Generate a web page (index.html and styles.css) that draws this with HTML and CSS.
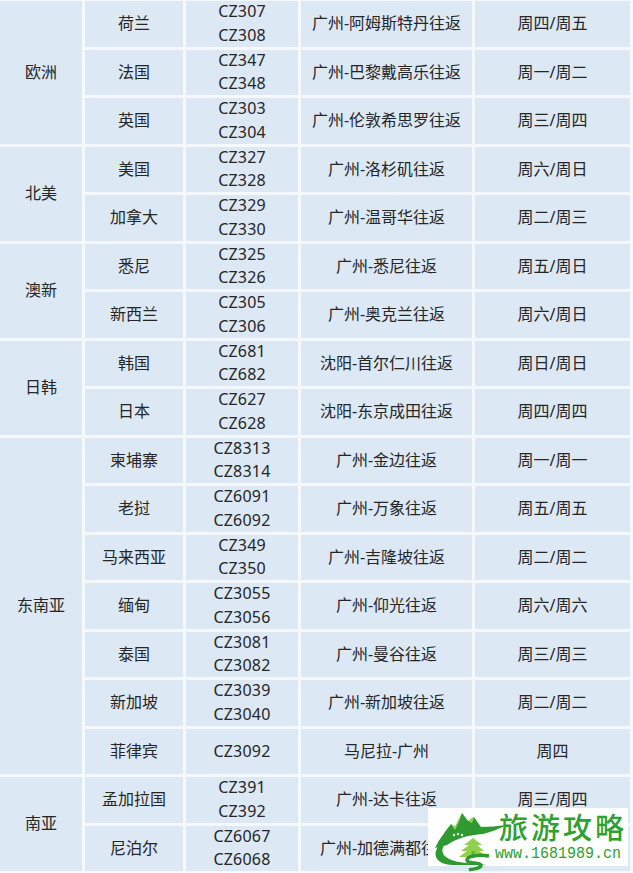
FILE: index.html
```html
<!DOCTYPE html>
<html lang="zh-CN">
<head>
<meta charset="utf-8">
<title>南航国际航线</title>
<link rel="stylesheet" href="styles.css">
</head>
<body>
<div class="sheet">
  <div class="table">
    <div class="cell region span3">欧洲</div>
    <div class="cell">荷兰</div><div class="cell code">CZ307<br>CZ308</div><div class="cell">广州-阿姆斯特丹往返</div><div class="cell">周四/周五</div>
    <div class="cell">法国</div><div class="cell code">CZ347<br>CZ348</div><div class="cell">广州-巴黎戴高乐往返</div><div class="cell">周一/周二</div>
    <div class="cell">英国</div><div class="cell code">CZ303<br>CZ304</div><div class="cell">广州-伦敦希思罗往返</div><div class="cell">周三/周四</div>

    <div class="cell region span2">北美</div>
    <div class="cell">美国</div><div class="cell code">CZ327<br>CZ328</div><div class="cell">广州-洛杉矶往返</div><div class="cell">周六/周日</div>
    <div class="cell">加拿大</div><div class="cell code">CZ329<br>CZ330</div><div class="cell">广州-温哥华往返</div><div class="cell">周二/周三</div>

    <div class="cell region span2">澳新</div>
    <div class="cell">悉尼</div><div class="cell code">CZ325<br>CZ326</div><div class="cell">广州-悉尼往返</div><div class="cell">周五/周日</div>
    <div class="cell">新西兰</div><div class="cell code">CZ305<br>CZ306</div><div class="cell">广州-奥克兰往返</div><div class="cell">周六/周日</div>

    <div class="cell region span2">日韩</div>
    <div class="cell">韩国</div><div class="cell code">CZ681<br>CZ682</div><div class="cell">沈阳-首尔仁川往返</div><div class="cell">周日/周日</div>
    <div class="cell">日本</div><div class="cell code">CZ627<br>CZ628</div><div class="cell">沈阳-东京成田往返</div><div class="cell">周四/周四</div>

    <div class="cell region span7">东南亚</div>
    <div class="cell">柬埔寨</div><div class="cell code">CZ8313<br>CZ8314</div><div class="cell">广州-金边往返</div><div class="cell">周一/周一</div>
    <div class="cell">老挝</div><div class="cell code">CZ6091<br>CZ6092</div><div class="cell">广州-万象往返</div><div class="cell">周五/周五</div>
    <div class="cell">马来西亚</div><div class="cell code">CZ349<br>CZ350</div><div class="cell">广州-吉隆坡往返</div><div class="cell">周二/周二</div>
    <div class="cell">缅甸</div><div class="cell code">CZ3055<br>CZ3056</div><div class="cell">广州-仰光往返</div><div class="cell">周六/周六</div>
    <div class="cell">泰国</div><div class="cell code">CZ3081<br>CZ3082</div><div class="cell">广州-曼谷往返</div><div class="cell">周三/周三</div>
    <div class="cell">新加坡</div><div class="cell code">CZ3039<br>CZ3040</div><div class="cell">广州-新加坡往返</div><div class="cell">周二/周二</div>
    <div class="cell">菲律宾</div><div class="cell code">CZ3092</div><div class="cell">马尼拉-广州</div><div class="cell">周四</div>

    <div class="cell region span2">南亚</div>
    <div class="cell">孟加拉国</div><div class="cell code">CZ391<br>CZ392</div><div class="cell">广州-达卡往返</div><div class="cell">周三/周四</div>
    <div class="cell">尼泊尔</div><div class="cell code">CZ6067<br>CZ6068</div><div class="cell">广州-加德满都往返</div><div class="cell"></div>
  </div>

  <div class="watermark">
    <svg class="logo" viewBox="0 0 78 58" width="78" height="58">
      <path d="M6,40 C10,31 16,24 22,16 L26,19 L33,5 L39,13 L45,9 L52,19 C60,19 68,18 78,17 C70,21 62,24 54,26 C40,27 28,30 18,37 Z" fill="#2f9a31"/>
      <path d="M22,16 L26,19 L33,5 L30,14 L26,22 Z" fill="#93d255"/>
      <path d="M39,13 L45,9 L43,15 Z" fill="#93d255"/>
      <circle cx="25" cy="27" r="1.2" fill="#e8f6d8"/>
      <circle cx="29" cy="26" r="1.2" fill="#e8f6d8"/>
      <circle cx="33" cy="27" r="1.2" fill="#e8f6d8"/>
      <path d="M14,34 C2,42 4,57 24,57 L58,57 C40,55 24,55 17,49 C12,45 12,39 18,35 Z" fill="#2f9a31"/>
      <path d="M44,30 L35,37 L40,37 L32,43 L38,43 L30,49 L58,49 L50,43 L55,43 L48,37 L53,37 Z" fill="#8fd14d"/>
      <path d="M44,43 L44,50" stroke="#5db536" stroke-width="3"/>
      <path d="M60,48 C50,46 38,48 38,52 C38,56 50,54 52,57 C53,60 44,61 40,62" stroke="#2f9a31" stroke-width="3.5" fill="none"/>
    </svg>
    <div class="brand">
      <div class="brand-title">旅游攻略</div>
      <div class="brand-url">www.1681989.cn</div>
    </div>
  </div>
</div>
</body>
</html>
```

FILE: styles.css
```css
html, body {
  margin: 0;
  padding: 0;
  background: #f5f9fd;
}

body {
  width: 633px;
  height: 873px;
  overflow: hidden;
  font-family: "Noto Sans", "Noto Sans CJK SC", sans-serif;
  color: #262626;
}

.sheet {
  position: relative;
  width: 633px;
  height: 873px;
  overflow: hidden;
}

.table {
  display: grid;
  grid-template-columns: 82px 98px 112px 171px 155px;
  grid-auto-rows: 45.5px;
  gap: 3px;
  padding-top: 1px;
  width: 633px;
  box-sizing: border-box;
}

.cell {
  background: #dce8f4;
  display: flex;
  align-items: center;
  justify-content: center;
  text-align: center;
  font-size: 16px;
  line-height: 23.5px;
  white-space: nowrap;
}

.code {
  letter-spacing: 0.2px;
}

.span2 { grid-row: span 2; }
.span3 { grid-row: span 3; }
.span7 { grid-row: span 7; }

.watermark {
  position: absolute;
  left: 428px;
  top: 808px;
  width: 200px;
  height: 58px;
  background: #ffffff;
  display: flex;
  align-items: flex-start;
}

.logo {
  flex: none;
  margin-left: 1px;
  margin-top: 0;
  overflow: visible;
}

.brand {
  margin-left: -14px;
  display: flex;
  flex-direction: column;
  align-items: flex-start;
}

.brand-title {
  font-family: "Noto Sans CJK SC", sans-serif;
  font-weight: 500;
  font-size: 29px;
  line-height: 36px;
  letter-spacing: 3px;
  color: #2ea12f;
  margin-left: 6px;
}

.brand-url {
  font-family: "Liberation Mono", "DejaVu Sans Mono", monospace;
  font-size: 15px;
  line-height: 18px;
  color: #2ea12f;
  letter-spacing: 0;
  margin-left: 2px;
  transform: scaleY(1.15);
  transform-origin: left top;
}
```
